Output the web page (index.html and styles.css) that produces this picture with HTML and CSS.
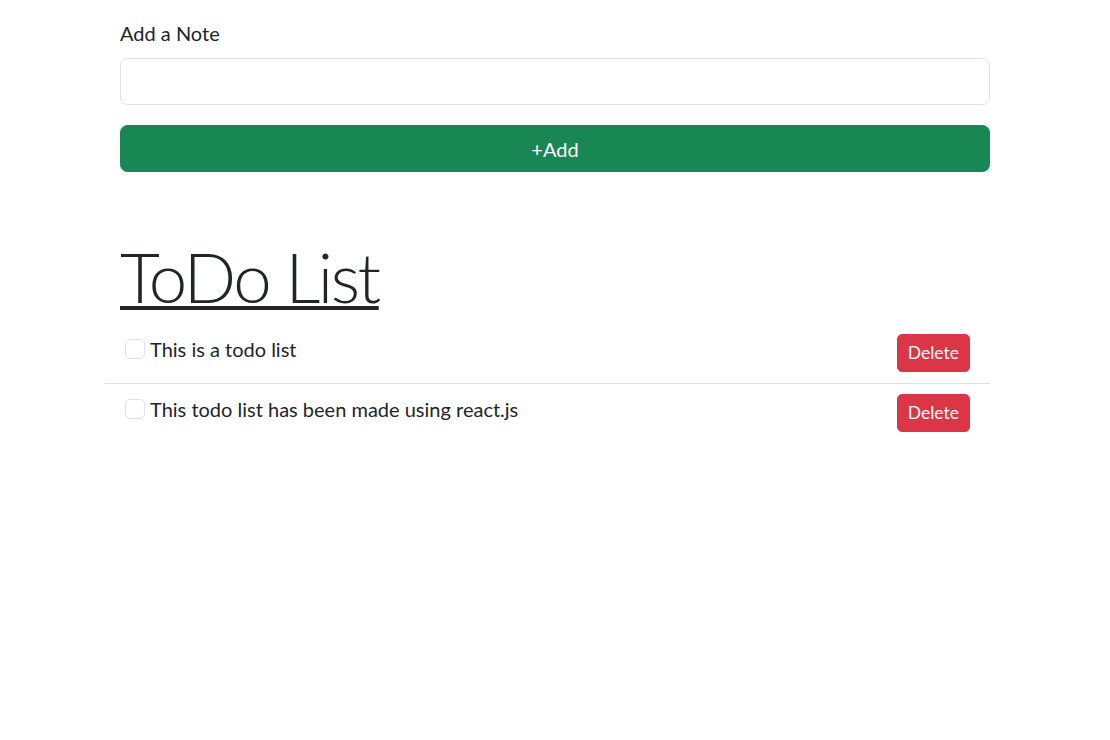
FILE: index.html
```html
<!DOCTYPE html>
<html lang="en">
<head>
<meta charset="utf-8">
<title>ToDo List</title>
<link rel="stylesheet" href="styles.css">
</head>
<body>
<div class="container">
  <form class="note-form">
    <label class="form-label" for="note">Add a Note</label>
    <input class="form-control" id="note" type="text">
    <button class="btn-add" type="button">+Add</button>
  </form>

  <h1 class="title"><u>ToDo List</u></h1>

  <ul class="todo-list">
    <li class="todo-item">
      <label class="form-check">
        <span class="check-box"></span>
        <span class="check-label">This is a todo list</span>
      </label>
      <button class="btn-delete" type="button">Delete</button>
    </li>
    <li class="todo-item">
      <label class="form-check">
        <span class="check-box"></span>
        <span class="check-label">This todo list has been made using react.js</span>
      </label>
      <button class="btn-delete" type="button">Delete</button>
    </li>
  </ul>
</div>
</body>
</html>
```
FILE: styles.css
```css
* { box-sizing: border-box; }

html, body {
  margin: 0;
  padding: 0;
  background: #ffffff;
}

body {
  font-family: "Lato", "Open Sans", sans-serif;
  font-size: 20px;
  line-height: 1.5;
  color: #212529;
}

.container {
  width: 870px;
  margin: 0 auto;
  padding-top: 18px;
}

.note-form {
  display: flex;
  flex-direction: column;
}

.form-label {
  display: block;
  margin-bottom: 10px;
  line-height: 30px;
}

.form-control {
  display: block;
  width: 100%;
  height: 47px;
  border: 1px solid #dee2e6;
  border-radius: 7.5px;
  padding: 7px 15px;
  font: inherit;
  background: #fff;
}

.btn-add {
  margin-top: 20px;
  width: 100%;
  height: 47px;
  border: 1px solid #198754;
  border-radius: 7.5px;
  background: #198754;
  color: #fff;
  font: inherit;
  line-height: 30px;
  padding: 7px 15px;
}

.title {
  margin: 60px 0 12px;
  font-size: 69px;
  font-weight: 300;
  line-height: 90px;
  letter-spacing: -2.5px;
}

.title u {
  text-decoration-thickness: 4px;
  text-underline-offset: 3px;
}

.todo-list {
  list-style: none;
  margin: 0 0 0 -16px;
  padding: 0;
}

.todo-item {
  display: flex;
  justify-content: space-between;
  align-items: flex-start;
  padding: 0 20px 10px 21px;
}

.todo-item + .todo-item {
  border-top: 1px solid #dee2e6;
  padding-top: 10px;
}

.todo-item:first-child {
  padding-bottom: 11px;
}

.form-check {
  display: flex;
  align-items: flex-start;
  gap: 5px;
  line-height: 30px;
}

.check-box {
  width: 20px;
  height: 20px;
  margin-top: 5px;
  border: 1px solid #dee2e6;
  border-radius: 5px;
  background: #fff;
  flex: none;
}

.btn-delete {
  border: 1px solid #dc3545;
  background: #dc3545;
  color: #fff;
  font: inherit;
  font-size: 17.5px;
  line-height: 26px;
  padding: 5px 10px;
  border-radius: 5px;
}
```
